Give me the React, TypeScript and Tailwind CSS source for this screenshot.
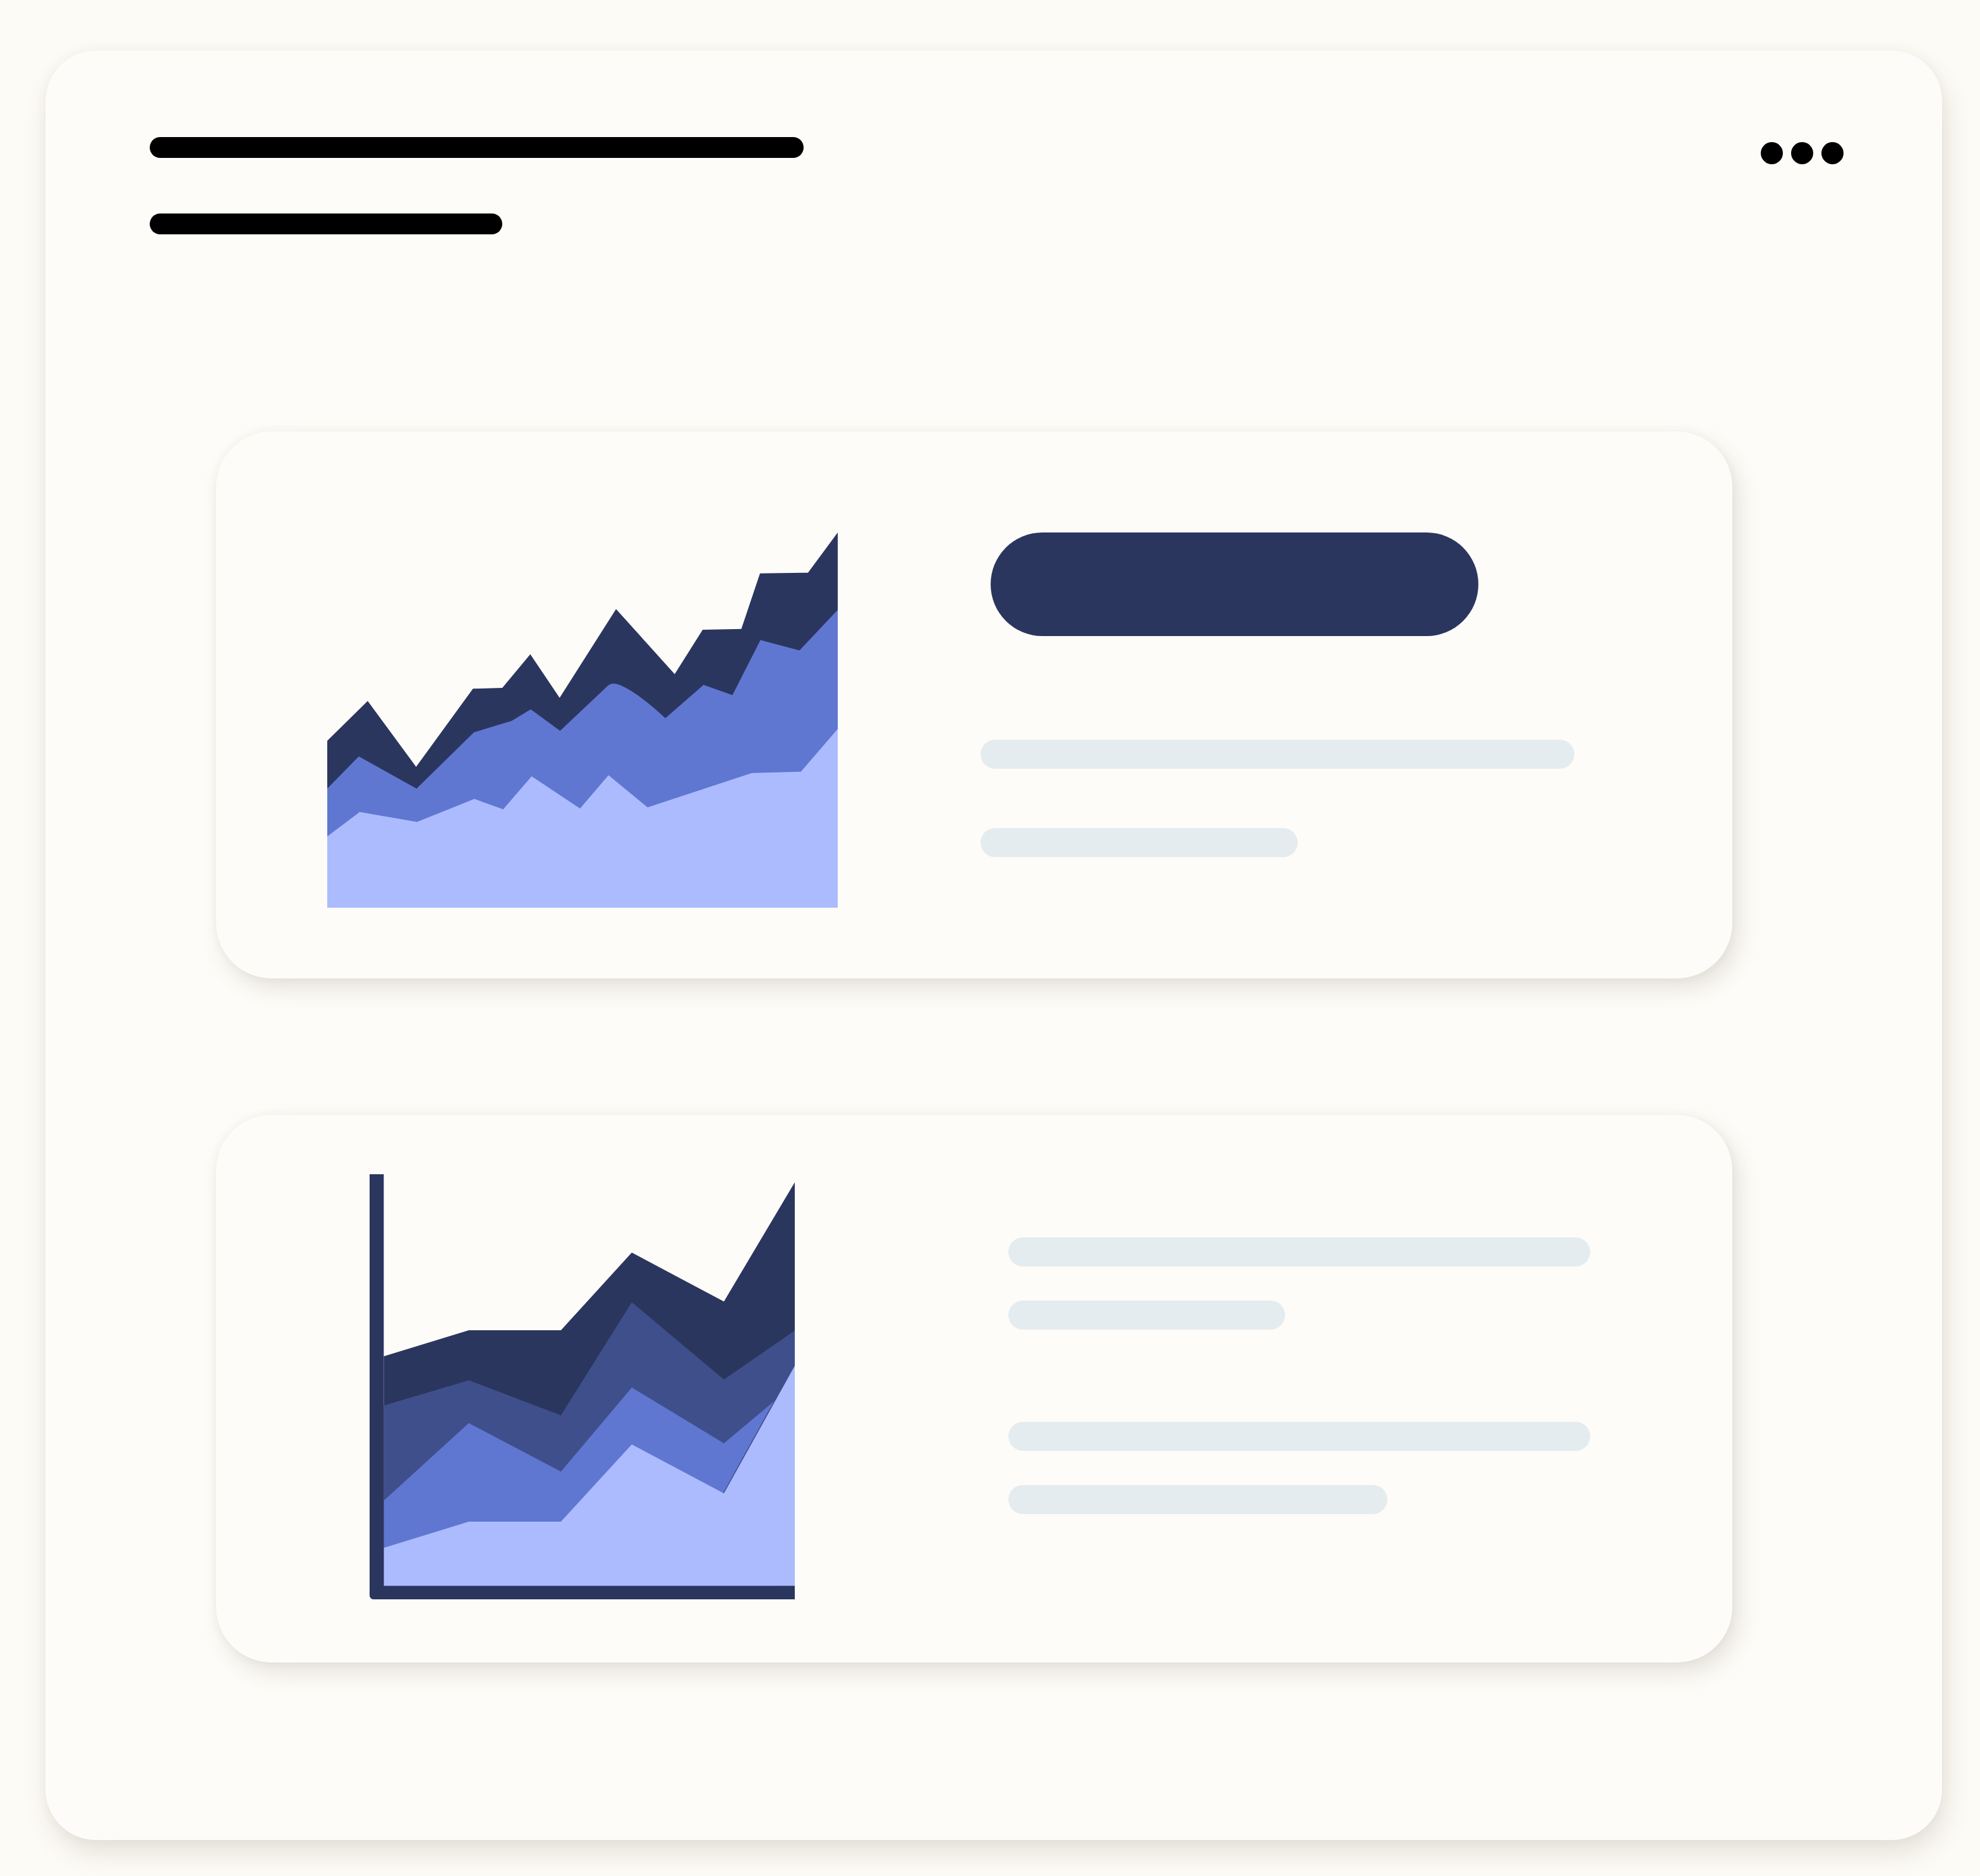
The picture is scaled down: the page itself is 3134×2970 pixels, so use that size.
import React from "react";

function Chart1() {
  return (
    <svg
      width={808}
      height={594}
      viewBox="312 318 1149 980"
      preserveAspectRatio="none"
      className="block shrink-0"
    >
      <polygon
        fill="#2b365f"
        points="312,862 403,758 512,930 640,726 706,724 769,636 835,750 962,518 1094,688 1157,572 1244,570 1286,425 1394,423 1461,318 1461,1298 312,1298"
      />
      <path
        fill="#5f77d1"
        d="M312,987 L383,903 L513,987 L642,840 L727,810 L770,780 L836,836 L943,719 Q952,708 970,716 Q1010,735 1073,803 L1159,716 L1224,743 L1287,599 L1375,626 L1461,520 L1461,1298 L312,1298 Z"
      />
      <polygon
        fill="#abbbfe"
        points="312,1112 385,1048 514,1074 643,1014 708,1041 772,955 881,1039 945,952 1033,1036 1268,946 1378,943 1461,831 1461,1298 312,1298"
      />
    </svg>
  );
}

function Chart2() {
  return (
    <svg
      width={673}
      height={673}
      viewBox="406 210 960 1172"
      preserveAspectRatio="none"
      className="block shrink-0"
    >
      <polygon
        fill="#2b365f"
        points="438,712 630,640 838,640 998,426 1206,561 1366,232 1366,1345 438,1345"
      />
      <polygon
        fill="#3f4f8b"
        points="438,848 630,778 838,875 998,563 1206,776 1366,641 1366,1345 438,1345"
      />
      <polygon
        fill="#5f77d1"
        points="438,1110 630,896 838,1030 998,798 1206,952 1320,835 1320,1345 438,1345"
      />
      <line x1="1206" y1="1090" x2="1320" y2="838" stroke="#3f4f8b" strokeWidth="4" />
      <polygon
        fill="#abbbfe"
        points="438,1240 630,1168 838,1168 998,955 1206,1090 1366,738 1366,1345 438,1345"
      />
      <path fill="#2b365f" d="M406,210 L438,210 L438,1345 L1366,1345 L1366,1382 L416,1382 Q406,1382 406,1370 Z" />
    </svg>
  );
}

function GrayBar({ w }: { w: string }) {
  return <div className={`h-[46px] rounded-[24px] bg-[#e4ecef] ${w}`} />;
}

export default function App() {
  return (
    <div className="w-[3134px] h-[2970px] bg-[#fdfbf6] pt-[80px] pl-[72px] overflow-hidden">
      <div className="w-[3002px] h-[2833px] rounded-[80px] bg-[#fefcf8] shadow-[6px_22px_40px_rgba(90,80,60,0.14),0_0_18px_rgba(90,80,60,0.05)] pt-[137px] pl-[165px] pr-[156px]">
        {/* header */}
        <div className="flex justify-between items-start">
          <div className="flex flex-col gap-[88px]">
            <div className="w-[1035px] h-[33px] rounded-full bg-black" />
            <div className="w-[558px] h-[33px] rounded-full bg-black" />
          </div>
          <div className="flex gap-[13px] mt-[8px]">
            <div className="w-[35px] h-[35px] rounded-full bg-black" />
            <div className="w-[35px] h-[35px] rounded-full bg-black" />
            <div className="w-[35px] h-[35px] rounded-full bg-black" />
          </div>
        </div>

        {/* card 1 */}
        <div className="ml-[105px] mt-[312px] w-[2400px] h-[866px] rounded-[88px] bg-[#fefcf8] shadow-[10px_16px_34px_rgba(80,70,50,0.14),0_0_14px_rgba(80,70,50,0.05)] flex pl-[176px] pt-[160px]">
          <Chart1 />
          <div className="ml-[226px] flex flex-col">
            <div className="ml-[16px] w-[772px] h-[164px] rounded-full bg-[#2b365f]" />
            <div className="mt-[164px]">
              <GrayBar w="w-[940px]" />
            </div>
            <div className="mt-[94px]">
              <GrayBar w="w-[502px]" />
            </div>
          </div>
        </div>

        {/* card 2 */}
        <div className="ml-[105px] mt-[216px] w-[2400px] h-[867px] rounded-[88px] bg-[#fefcf8] shadow-[10px_16px_34px_rgba(80,70,50,0.14),0_0_14px_rgba(80,70,50,0.05)] flex pl-[243px] pt-[94px]">
          <Chart2 />
          <div className="ml-[338px] mt-[100px] flex flex-col">
            <GrayBar w="w-[921px]" />
            <div className="mt-[54px]">
              <GrayBar w="w-[438px]" />
            </div>
            <div className="mt-[146px]">
              <GrayBar w="w-[921px]" />
            </div>
            <div className="mt-[54px]">
              <GrayBar w="w-[600px]" />
            </div>
          </div>
        </div>
      </div>
    </div>
  );
}
